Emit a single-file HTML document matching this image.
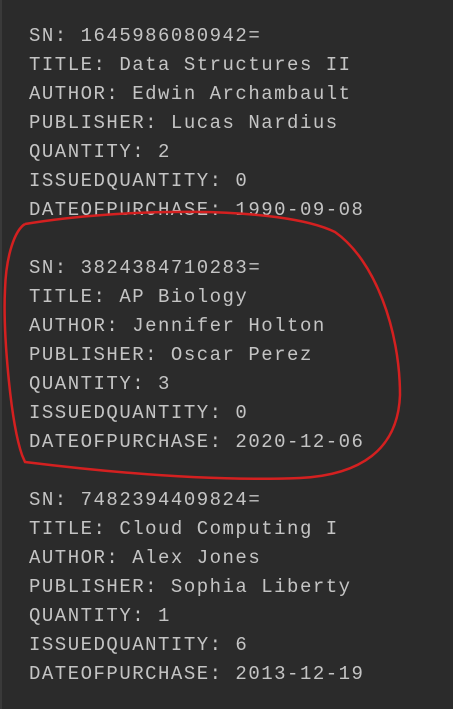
<!DOCTYPE html>
<html><head><meta charset="utf-8"><style>
html,body{margin:0;padding:0;width:453px;height:709px;background:#2b2b2b;overflow:hidden}
.t{position:absolute;left:29px;top:22px;font-family:"Liberation Mono","Courier New","DejaVu Sans Mono",monospace;font-size:19px;letter-spacing:1.5px;line-height:29px;color:#c4c4c4;white-space:pre}
.b{position:absolute;left:0;top:0;width:2px;height:709px;background:#3a3a3a}
svg{position:absolute;left:0;top:0}
</style></head><body>
<div class="b"></div>
<div class="t">SN: 1645986080942=
TITLE: Data Structures II
AUTHOR: Edwin Archambault
PUBLISHER: Lucas Nardius
QUANTITY: 2
ISSUEDQUANTITY: 0
DATEOFPURCHASE: 1990-09-08

SN: 3824384710283=
TITLE: AP Biology
AUTHOR: Jennifer Holton
PUBLISHER: Oscar Perez
QUANTITY: 3
ISSUEDQUANTITY: 0
DATEOFPURCHASE: 2020-12-06

SN: 7482394409824=
TITLE: Cloud Computing I
AUTHOR: Alex Jones
PUBLISHER: Sophia Liberty
QUANTITY: 1
ISSUEDQUANTITY: 6
DATEOFPURCHASE: 2013-12-19</div>
<svg width="453" height="709"><path d="M 25 224 C 120 208, 280 205, 335 232 C 375 260, 400 330, 400 395 C 398 450, 360 475, 300 478 C 200 482, 90 470, 25 462 L 22 455 C 10 420, 3 330, 5 290 C 6 255, 15 230, 25 224" fill="none" stroke="#d42020" stroke-width="2.5"/></svg>
</body></html>
